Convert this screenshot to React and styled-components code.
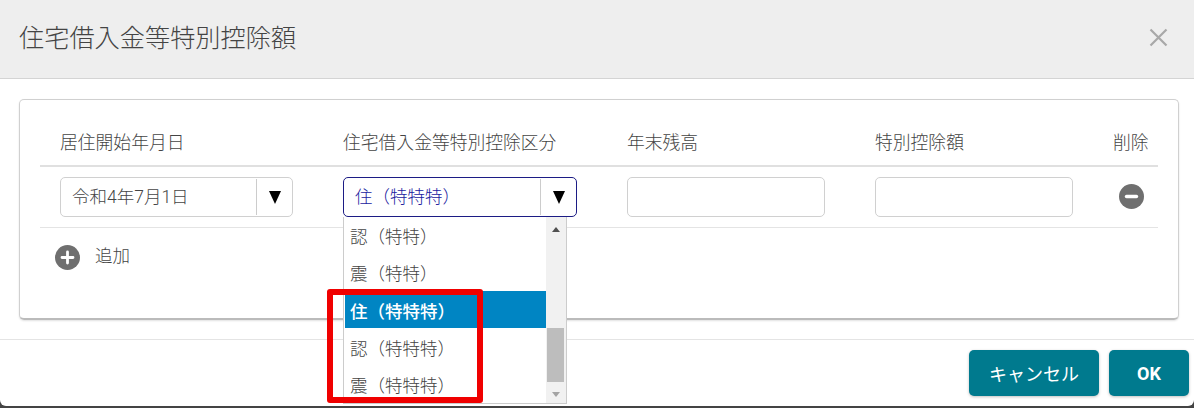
import React from "react";
import styled, { createGlobalStyle } from "styled-components";

const Global = createGlobalStyle`
  html, body { margin: 0; padding: 0; background: #444; }
  body { height: 408px; overflow: hidden; font-family: Roboto, "Noto Sans CJK JP", sans-serif; color: #444; }
  * { box-sizing: border-box; }
`;

const Dialog = styled.div`
  position: relative;
  width: 1194px;
  height: 406px;
  background: #fff;
  border-radius: 0 0 6px 6px;
  overflow: hidden;
`;

const Header = styled.header`
  height: 79px;
  background: #eee;
  border-bottom: 1px solid #d4d4d4;
  display: flex;
  align-items: center;
  justify-content: space-between;
  padding: 0 26px 6px 19px;
`;

const Title = styled.h1`
  margin: 0;
  font-size: 25.2px;
  font-weight: 300;
  color: #444;
`;

const CloseBtn = styled.svg`
  width: 19px;
  height: 19px;
  margin-top: 3px;
`;

const Body = styled.div`
  height: 261px;
  padding: 20px 15px 0 19px;
  border-bottom: 1px solid #e4e4e4;
`;

const Card = styled.section`
  height: 221px;
  border: 1px solid #d0d0d0;
  border-bottom: 2px solid #bbb;
  border-radius: 5px;
  padding: 0 19px 0 20px;
  box-shadow: 0 1px 2px rgba(0, 0, 0, 0.12);
`;

const columns = "283px 284px 248px 238px 65px";

const HeadRow = styled.div`
  display: grid;
  grid-template-columns: ${columns};
  width: 1118px;
  height: 67px;
  padding-top: 29px;
  border-bottom: 2px solid #e0e0e0;
`;

const HeadCell = styled.div`
  padding-left: 20px;
  font-size: 17.8px;
  line-height: 28px;
  font-weight: 300;
  white-space: nowrap;
`;

const Row = styled.div`
  display: grid;
  grid-template-columns: ${columns};
  width: 1118px;
  height: 61px;
  padding-top: 10px;
  border-bottom: 1px solid #e4e4e4;
`;

const Cell = styled.div`
  padding-left: 20px;
  position: relative;
`;

const Select = styled.div`
  display: flex;
  align-items: center;
  width: ${(p) => p.$w}px;
  height: 40px;
  border: 1px solid ${(p) => (p.$open ? "#1c1c85" : "#d0d0d0")};
  border-radius: 5px;
  background: #fff;
  color: ${(p) => (p.$open ? "#2222a0" : "#444")};
  font-size: 17.5px;
  font-weight: 300;
`;

const SelectText = styled.span`
  flex: 1;
  padding: 0 0 3px 11px;
  white-space: nowrap;
`;

const ArrowBox = styled.span`
  width: 36px;
  height: 36px;
  border-left: 1px solid #ccc;
  display: flex;
  align-items: center;
  justify-content: center;
`;

const Arrow = styled.i`
  width: 0;
  height: 0;
  border-left: 6.5px solid transparent;
  border-right: 6.5px solid transparent;
  border-top: 13px solid #000;
`;

const Input = styled.input`
  display: block;
  width: 198px;
  height: 40px;
  border: 1px solid #d0d0d0;
  border-radius: 5px;
  background: #fff;
`;

const IconCell = styled.div`
  display: flex;
  justify-content: center;
  padding: 7px 0 0 11px;
`;

const RoundIcon = styled.svg`
  width: 25px;
  height: 25px;
  display: block;
`;

const AddBtn = styled.div`
  display: flex;
  align-items: flex-start;
  gap: 15px;
  margin: 17px 0 0 15px;
  font-size: 17.5px;
  font-weight: 300;
  line-height: 22px;
`;

const Dropdown = styled.div`
  position: absolute;
  top: 40px;
  left: 20px;
  width: 224px;
  height: 187px;
  display: flex;
  background: #fff;
  border: 1px solid #ccc;
  border-top: 0;
  z-index: 2;
`;

const List = styled.ul`
  flex: 1;
  margin: -1px 0 0;
  padding: 0 0 0 1px;
  list-style: none;
  overflow: hidden;
`;

const Item = styled.li`
  height: 37.3px;
  line-height: 37.3px;
  padding: 3px 0 0 5px;
  font-size: 17.5px;
  font-weight: ${(p) => (p.$on ? 500 : 300)};
  color: ${(p) => (p.$on ? "#fff" : "#444")};
  background: ${(p) => (p.$on ? "#0085c3" : "transparent")};
  white-space: nowrap;
`;

const Scrollbar = styled.div`
  width: 20px;
  background: #f1f1f1;
  position: relative;
  display: flex;
  flex-direction: column;
  align-items: center;
  justify-content: space-between;
  padding: 10px 0 6px;
`;

const ScrollUp = styled.i`
  border-left: 4.5px solid transparent;
  border-right: 4.5px solid transparent;
  border-bottom: 5px solid #505050;
`;

const ScrollDown = styled.i`
  border-left: 4.5px solid transparent;
  border-right: 4.5px solid transparent;
  border-top: 5px solid #a3a3a3;
`;

const ScrollThumb = styled.div`
  position: absolute;
  left: 1px;
  right: 2px;
  top: 111px;
  height: 54px;
  background: #bdbdbd;
`;

const Footer = styled.footer`
  display: flex;
  justify-content: flex-end;
  gap: 10px;
  padding: 10px 5px 0 0;
`;

const Button = styled.button`
  width: ${(p) => p.$w}px;
  height: 46px;
  border: 0;
  border-radius: 5px;
  background: #007a8e;
  color: #fff;
  font-family: inherit;
  font-size: ${(p) => p.$size}px;
  font-weight: ${(p) => p.$weight};
  box-shadow: 0 1px 3px rgba(0, 0, 0, 0.25);
`;

const RedMark = styled.div`
  position: absolute;
  left: 327px;
  top: 289px;
  width: 156px;
  height: 114px;
  border: 6px solid #f00000;
  border-radius: 3px;
  z-index: 3;
`;

const options = ["認（特特）", "震（特特）", "住（特特特）", "認（特特特）", "震（特特特）"];

function MinusIcon() {
  return (
    <RoundIcon viewBox="0 0 25 25">
      <circle cx="12.5" cy="12.5" r="12.5" fill="#6f6f6f" />
      <path d="M7.5 12.5H17.5" stroke="#fff" strokeWidth="3.4" strokeLinecap="round" />
    </RoundIcon>
  );
}

function PlusIcon() {
  return (
    <RoundIcon viewBox="0 0 25 25">
      <circle cx="12.5" cy="12.5" r="12.5" fill="#6f6f6f" />
      <path d="M7 12.5H18M12.5 7V18" stroke="#fff" strokeWidth="2.8" strokeLinecap="round" />
    </RoundIcon>
  );
}

export default function App() {
  return (
    <>
      <Global />
      <Dialog>
        <Header>
          <Title>住宅借入金等特別控除額</Title>
          <CloseBtn viewBox="0 0 19 19">
            <path d="M1.5 1.5L17.5 17.5M17.5 1.5L1.5 17.5" stroke="#a8a8a8" strokeWidth="2.2" fill="none" />
          </CloseBtn>
        </Header>
        <Body>
          <Card>
            <HeadRow>
              <HeadCell>居住開始年月日</HeadCell>
              <HeadCell>住宅借入金等特別控除区分</HeadCell>
              <HeadCell>年末残高</HeadCell>
              <HeadCell>特別控除額</HeadCell>
              <HeadCell>削除</HeadCell>
            </HeadRow>
            <Row>
              <Cell>
                <Select $w={233}>
                  <SelectText>令和4年7月1日</SelectText>
                  <ArrowBox><Arrow /></ArrowBox>
                </Select>
              </Cell>
              <Cell>
                <Select $w={234} $open>
                  <SelectText>住（特特特）</SelectText>
                  <ArrowBox><Arrow /></ArrowBox>
                </Select>
                <Dropdown>
                  <List>
                    {options.map((o, i) => (
                      <Item key={o} $on={i === 2}>{o}</Item>
                    ))}
                  </List>
                  <Scrollbar>
                    <ScrollUp />
                    <ScrollThumb />
                    <ScrollDown />
                  </Scrollbar>
                </Dropdown>
              </Cell>
              <Cell><Input /></Cell>
              <Cell><Input /></Cell>
              <IconCell><MinusIcon /></IconCell>
            </Row>
            <AddBtn>
              <PlusIcon />
              <span>追加</span>
            </AddBtn>
          </Card>
        </Body>
        <Footer>
          <Button $w={130} $size={18} $weight={400}>キャンセル</Button>
          <Button $w={80} $size={18} $weight={700}>OK</Button>
        </Footer>
        <RedMark />
      </Dialog>
    </>
  );
}
